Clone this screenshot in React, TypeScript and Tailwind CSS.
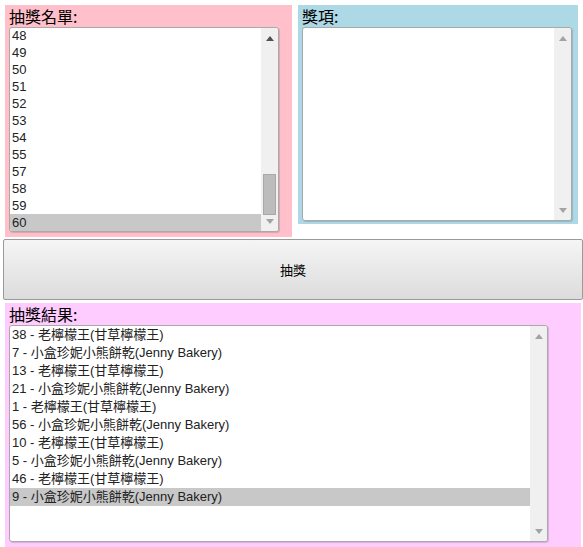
import React from "react";

const FONT = '"Liberation Sans", Arial, "Noto Sans CJK TC", sans-serif';
const CJK = '"Noto Sans CJK TC", "Liberation Sans", sans-serif';

const names = ["48", "49", "50", "51", "52", "53", "54", "55", "57", "58", "59", "60"];

const results = [
  "38 - 老檸檬王(甘草檸檬王)",
  "7 - 小盒珍妮小熊餅乾(Jenny Bakery)",
  "13 - 老檸檬王(甘草檸檬王)",
  "21 - 小盒珍妮小熊餅乾(Jenny Bakery)",
  "1 - 老檸檬王(甘草檸檬王)",
  "56 - 小盒珍妮小熊餅乾(Jenny Bakery)",
  "10 - 老檸檬王(甘草檸檬王)",
  "5 - 小盒珍妮小熊餅乾(Jenny Bakery)",
  "46 - 老檸檬王(甘草檸檬王)",
  "9 - 小盒珍妮小熊餅乾(Jenny Bakery)",
];

const Arrow = ({ up, dark }: { up?: boolean; dark?: boolean }) => (
  <svg width="8" height="5" viewBox="0 0 8 5">
    <polygon
      points={up ? "4,0 8,5 0,5" : "0,0 8,0 4,5"}
      fill={dark ? "#505050" : "#a3a3a3"}
    />
  </svg>
);

const Scrollbar = ({ thumb }: { thumb?: boolean }) => (
  <div className="w-[17px] shrink-0 bg-[#f0f0f0] flex flex-col items-center justify-between pt-[8px] pb-[7px] rounded-r-[3px]">
    <Arrow up dark={thumb} />
    {thumb && <div className="flex-1" />}
    {thumb && (
      <div className="w-[13px] h-[41px] bg-[#bcbcbc] border border-[#a8a8a8] mb-[4px]" />
    )}
    <Arrow />
  </div>
);

const Label = ({ text }: { text: string }) => (
  <div
    className="text-[16px] leading-[22px] text-black"
    style={{ fontFamily: CJK }}
  >
    {text}
  </div>
);

export default function App() {
  return (
    <div className="bg-white w-[583px] h-[547px] overflow-hidden" style={{ fontFamily: FONT }}>
      <div className="flex items-start gap-[6px] pl-[5px] pt-[5px]">
        <div className="w-[287px] h-[232px] bg-[#ffc0cb] pl-[4px]">
          <Label text="抽獎名單:" />
          <div className="w-[270px] h-[205px] bg-white border border-[#a9a9a9] rounded-[3px] flex overflow-hidden shadow-[1px_1px_1px_rgba(0,0,0,0.15)]">
            <div className="flex-1 overflow-hidden">
              <div className="-mt-px">
                {names.map((n) => (
                  <div
                    key={n}
                    className={`h-[17px] leading-[17px] pl-[2px] text-[13px] text-[#222] ${
                      n === "60" ? "bg-[#c8c8c8]" : ""
                    }`}
                  >
                    {n}
                  </div>
                ))}
              </div>
            </div>
            <Scrollbar thumb />
          </div>
        </div>
        <div className="w-[280px] h-[219px] bg-[#add8e6] pl-[4px]">
          <Label text="獎項:" />
          <div className="w-[270px] h-[194px] bg-white border border-[#a9a9a9] rounded-[3px] flex overflow-hidden shadow-[1px_1px_1px_rgba(0,0,0,0.15)]">
            <div className="flex-1" />
            <Scrollbar />
          </div>
        </div>
      </div>

      <button
        className="block ml-[3px] mt-[2px] w-[580px] h-[61px] border border-[#9a9a9a] rounded-[2px] bg-gradient-to-b from-[#f5f5f5] to-[#dcdcdc] text-[13px] text-black"
        style={{ fontFamily: CJK }}
      >
        抽獎
      </button>

      <div className="ml-[5px] mt-[3px] w-[576px] h-[244px] bg-[#ffccff] pl-[4px]">
        <Label text="抽獎結果:" />
        <div className="w-[539px] h-[217px] bg-white border border-[#a9a9a9] rounded-[3px] flex overflow-hidden shadow-[1px_1px_1px_rgba(0,0,0,0.15)]">
          <div className="flex-1 overflow-hidden">
            {results.map((r, i) => (
              <div
                key={i}
                className={`h-[18px] leading-[18px] pl-[2px] text-[13px] text-[#222] whitespace-nowrap ${
                  i === results.length - 1 ? "bg-[#c8c8c8]" : ""
                }`}
              >
                {r}
              </div>
            ))}
          </div>
          <Scrollbar />
        </div>
      </div>
    </div>
  );
}
